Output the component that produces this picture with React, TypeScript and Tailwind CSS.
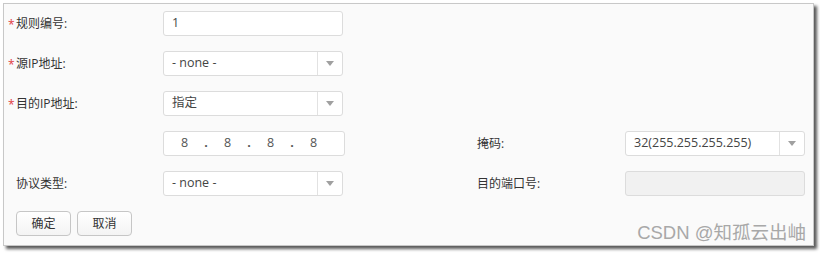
import React from "react";

const font = { fontFamily: '"Open Sans", "Noto Sans CJK SC", sans-serif' };

function Label({ req, text }: { req?: boolean; text: string }) {
  return (
    <div className="w-[155px] flex items-center h-full text-[12px] text-[#333]">
      <span className="w-[8px] text-[#e0393e] text-[12px] leading-none pt-[3px]">{req ? "*" : ""}</span>
      <span>{text}</span>
    </div>
  );
}

function Select({ value, w = 180 }: { value: string; w?: number }) {
  return (
    <div
      className="h-[25px] flex items-stretch border border-[#dcdcdc] rounded-[3px] bg-white"
      style={{ width: w }}
    >
      <div className="flex-1 flex items-center pl-[8px] text-[12.5px] text-[#444]">{value}</div>
      <div className="w-[25px] border-l border-[#e2e2e2] flex items-center justify-center">
        <div className="w-0 h-0 border-l-[4.5px] border-r-[4.5px] border-t-[5px] border-l-transparent border-r-transparent border-t-[#a0a0a0]" />
      </div>
    </div>
  );
}

export default function App() {
  return (
    <div className="w-[820px] h-[253px] bg-white pt-[3px] pl-[3px]" style={font}>
      <div className="w-[811px] h-[243px] border border-[#c8c8c8] bg-[#fafafa] shadow-[3px_3px_3px_rgba(0,0,0,0.65)] pt-[7px] pl-[4px] relative">
        <div className="flex flex-col gap-[15px]">
          <div className="flex h-[25px] items-center">
            <Label req text="规则编号:" />
            <div className="w-[180px] h-[25px] border border-[#dcdcdc] rounded-[3px] bg-white flex items-center pl-[8px] text-[12.5px] text-[#444]">
              1
            </div>
          </div>
          <div className="flex h-[25px] items-center">
            <Label req text="源IP地址:" />
            <Select value="- none -" />
          </div>
          <div className="flex h-[25px] items-center">
            <Label req text="目的IP地址:" />
            <Select value="指定" />
          </div>
          <div className="flex h-[25px] items-center">
            <div className="w-[155px]" />
            <div className="w-[182px] h-[25px] border border-[#dcdcdc] rounded-[3px] bg-white flex items-center pl-[5px] text-[12.5px] text-[#555]">
              <span className="w-[31px] text-center">8</span>
              <span className="w-[12px] text-center font-bold">.</span>
              <span className="w-[31px] text-center">8</span>
              <span className="w-[12px] text-center font-bold">.</span>
              <span className="w-[31px] text-center">8</span>
              <span className="w-[12px] text-center font-bold">.</span>
              <span className="w-[31px] text-center">8</span>
            </div>
            <div className="w-[132px]" />
            <div className="w-[148px] text-[12px] text-[#333]">掩码:</div>
            <Select value="32(255.255.255.255)" />
          </div>
          <div className="flex h-[25px] items-center">
            <Label text="协议类型:" />
            <Select value="- none -" />
            <div className="w-[134px]" />
            <div className="w-[148px] text-[12px] text-[#333]">目的端口号:</div>
            <div className="w-[180px] h-[25px] border border-[#dcdcdc] rounded-[3px] bg-[#f1f1f1]" />
          </div>
          <div className="flex h-[25px] items-center gap-[6px] pl-[8px]">
            <button className="w-[55px] h-[25px] border border-[#c6c6c6] rounded-[4px] bg-gradient-to-b from-white to-[#f3f3f3] text-[12px] text-[#333]">
              确定
            </button>
            <button className="w-[55px] h-[25px] border border-[#c6c6c6] rounded-[4px] bg-gradient-to-b from-white to-[#f3f3f3] text-[12px] text-[#333]">
              取消
            </button>
          </div>
        </div>
        <div
          className="absolute right-[7px] bottom-[3px] text-[18.5px] text-[#a8a8a8] leading-none"
          style={{ fontFamily: '"Liberation Sans", "Noto Sans CJK SC", sans-serif' }}
        >
          CSDN @知孤云出岫
        </div>
      </div>
    </div>
  );
}
